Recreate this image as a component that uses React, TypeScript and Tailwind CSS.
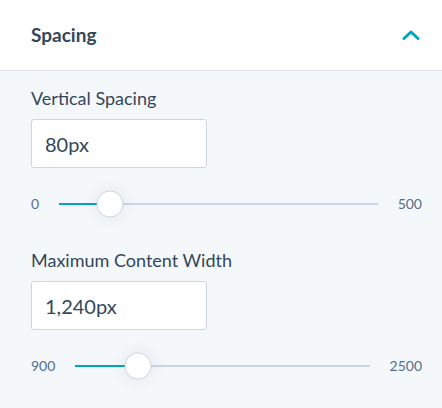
import React from "react";

function Slider({ min, max, value }: { min: number; max: number; value: number }) {
  const pct = ((value - min) / (max - min)) * 100;
  return (
    <div className="mt-[22px] flex h-[27px] items-center gap-5">
      <span className="text-[14px] text-[#516f90]">{min}</span>
      <div className="relative h-[2px] flex-1 bg-[#cbd6e2]">
        <div className="absolute left-0 top-0 h-[2px] bg-[#00a4bd]" style={{ width: `${pct}%` }} />
        <div
          className="absolute top-1/2 h-[27px] w-[27px] -translate-x-1/2 -translate-y-1/2 rounded-full border border-[#cbd6e2] bg-white shadow-[0_0_12px_4px_rgba(45,62,80,0.06)]"
          style={{ left: `${pct}%` }}
        />
      </div>
      <span className="text-[14px] text-[#516f90]">{max}</span>
    </div>
  );
}

function Field({ label, value }: { label: string; value: string }) {
  return (
    <div>
      <div className="text-[18px] leading-6 text-[#33475b]">{label}</div>
      <div className="mt-[9px] flex h-[49px] w-[176px] items-center rounded-[3px] border border-[#cbd6e2] bg-white px-[13px] text-[20px] text-[#33475b]">
        {value}
      </div>
    </div>
  );
}

export default function App() {
  return (
    <div className="h-[408px] w-[442px] overflow-hidden bg-[#f5f8fa]" style={{ fontFamily: "Lato, 'Noto Sans', sans-serif" }}>
      <div className="flex h-[71px] items-center justify-between border-b border-[#dfe3eb] bg-white pl-[31px] pr-[22px]">
        <span className="text-[19px] font-bold text-[#33475b]">Spacing</span>
        <svg width="18" height="12" viewBox="0 0 18 12" fill="none">
          <polyline points="2,9.5 9,3 16,9.5" stroke="#00a4bd" strokeWidth="3" strokeLinecap="round" strokeLinejoin="round" />
        </svg>
      </div>
      <div className="pl-[31px] pr-[20px] pt-[15px]">
        <Field label="Vertical Spacing" value="80px" />
        <Slider min={0} max={500} value={80} />
        <div className="mt-[31px]">
          <Field label="Maximum Content Width" value="1,240px" />
        </div>
        <Slider min={900} max={2500} value={1240} />
      </div>
    </div>
  );
}
